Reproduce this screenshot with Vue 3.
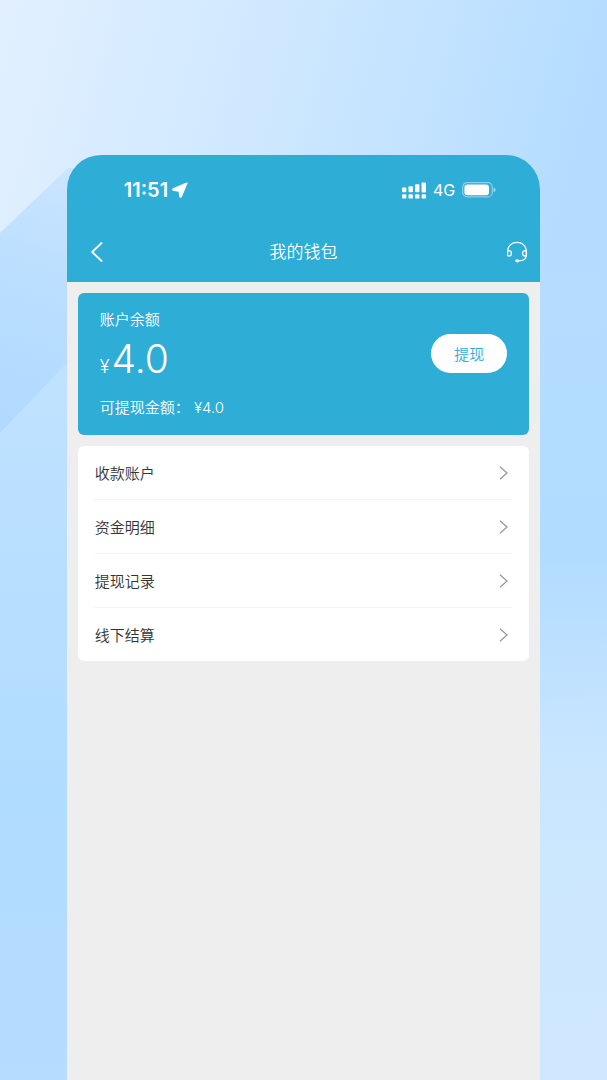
<template>
  <div class="wallet-page">
    <!-- 背景光影 -->
    <svg class="backdrop" viewBox="0 0 607 1080" preserveAspectRatio="none" aria-hidden="true">
      <defs>
        <linearGradient id="sky" x1="0" y1="0" x2="590" y2="160" gradientUnits="userSpaceOnUse">
          <stop offset="0" stop-color="#e2f0ff" />
          <stop offset="0.4" stop-color="#d1e9ff" />
          <stop offset="0.75" stop-color="#c1e2ff" />
          <stop offset="1" stop-color="#b3dcff" />
        </linearGradient>
        <linearGradient id="band" x1="0" y1="430" x2="90" y2="170" gradientUnits="userSpaceOnUse">
          <stop offset="0" stop-color="#b1d9ff" />
          <stop offset="0.5" stop-color="#b9deff" />
          <stop offset="0.8" stop-color="#c3e2ff" />
          <stop offset="1" stop-color="#cde6ff" />
        </linearGradient>
        <linearGradient id="left" x1="0" y1="380" x2="0" y2="1080" gradientUnits="userSpaceOnUse">
          <stop offset="0" stop-color="#bfe2ff" />
          <stop offset="0.25" stop-color="#b9dfff" />
          <stop offset="0.6" stop-color="#b0dcff" />
          <stop offset="1" stop-color="#b6dcff" />
        </linearGradient>
        <linearGradient id="right" x1="540" y1="160" x2="555" y2="1080" gradientUnits="userSpaceOnUse">
          <stop offset="0" stop-color="#b3dcff" stop-opacity="0" />
          <stop offset="0.15" stop-color="#b4ddff" />
          <stop offset="0.43" stop-color="#b2dcff" />
          <stop offset="0.66" stop-color="#cae6ff" />
          <stop offset="1" stop-color="#cfe8ff" />
        </linearGradient>
      </defs>
      <rect width="607" height="1080" fill="url(#sky)" />
      <path d="M0 233L68 168H100V460H0z" fill="url(#band)" />
      <path d="M0 433L68 362H100V1080H0z" fill="url(#left)" />
      <rect x="500" y="160" width="107" height="920" fill="url(#right)" />
    </svg>

    <div class="phone">
      <header class="header">
        <div class="status-bar">
          <div class="status-left">
            <span class="time">11:51</span>
            <svg width="16" height="16" viewBox="0 0 16 16" aria-hidden="true">
              <path d="M14.8 1.2L1.2 7Q.6 7.8 1.6 8.3L7.2 8.9L8 14.4Q8.4 15.4 9.1 14.6Z" fill="#fff" stroke="#fff" stroke-width="1.6" stroke-linejoin="round" />
            </svg>
          </div>
          <div class="status-right">
            <svg width="24" height="17" viewBox="0 0 24 17" fill="#fff" aria-hidden="true">
              <rect x="0" y="5.5" width="4.4" height="4.8" rx="1" />
              <rect x="6.5" y="4.3" width="4.4" height="6" rx="1" />
              <rect x="13" y="2.2" width="4.4" height="8.1" rx="1" />
              <rect x="19.6" y="0.6" width="4.4" height="9.8" rx="1" />
              <rect x="0" y="12.2" width="4.4" height="4.4" rx="1.2" />
              <rect x="6.5" y="12.2" width="4.4" height="4.4" rx="1.2" />
              <rect x="13" y="12.2" width="4.4" height="4.4" rx="1.2" />
              <rect x="19.6" y="12.2" width="4.4" height="4.4" rx="1.2" />
            </svg>
            <span class="network">4G</span>
            <svg width="34" height="16" viewBox="0 0 34 16" aria-hidden="true">
              <rect x="0.7" y="0.7" width="29.6" height="14.2" rx="4.5" fill="none" stroke="#fff" stroke-opacity="0.45" stroke-width="1.2" />
              <rect x="2.4" y="2.4" width="24.6" height="10.8" rx="3" fill="#fff" />
              <path d="M31.6 5.4Q33.6 6.2 33.6 7.8Q33.6 9.4 31.6 10.2z" fill="#fff" fill-opacity="0.55" />
            </svg>
          </div>
        </div>

        <nav class="nav-bar">
          <button class="icon-button" type="button" aria-label="返回">
            <svg width="12" height="20" viewBox="0 0 12 20" fill="none" stroke="#fff" stroke-width="1.8" stroke-linecap="round" stroke-linejoin="round">
              <path d="M10.6 1L1.2 10L10.6 19" />
            </svg>
          </button>
          <h1>我的钱包</h1>
          <button class="icon-button service" type="button" aria-label="客服">
            <svg width="22" height="22" viewBox="0 0 22 22" fill="none" stroke="#fff" stroke-width="1.3" stroke-linecap="round">
              <path d="M1.6 10.6V9.6C2 4.6 6 1.4 11 1.4S20 4.6 20.4 9.6V14.2Q20.2 18.2 16 19.4L12.6 19.9" />
              <path d="M1.6 10.8Q1.6 9.7 2.9 9.7Q5.4 9.8 5.4 12.4Q5.4 15 2.9 15.1Q1.6 15.1 1.6 14Z" />
              <path d="M20.4 10.8Q20.4 9.7 19.1 9.7Q16.6 9.8 16.6 12.4Q16.6 15 19.1 15.1Q20.4 15.1 20.4 14Z" />
              <ellipse cx="11.2" cy="19.8" rx="2" ry="1.6" fill="#fff" stroke="none" />
            </svg>
          </button>
        </nav>
      </header>

      <main class="content">
        <section class="balance-card">
          <div class="balance-info">
            <p class="label">账户余额</p>
            <p class="amount"><span class="symbol">¥</span><span>{{ balance }}</span></p>
            <p class="label">可提现金额： ¥{{ balance }}</p>
          </div>
          <button class="withdraw" type="button">提现</button>
        </section>

        <ul class="menu">
          <li v-for="item in menus" :key="item">
            <a href="#">
              <span>{{ item }}</span>
              <svg width="9" height="14" viewBox="0 0 9 14" fill="none" stroke="#999" stroke-width="1.3" aria-hidden="true">
                <path d="M1 0.8L8 7L1 13.2" />
              </svg>
            </a>
          </li>
        </ul>
      </main>
    </div>
  </div>
</template>

<script setup>
import { ref } from 'vue'

const balance = ref('4.0')
const menus = ['收款账户', '资金明细', '提现记录', '线下结算']
</script>

<style>
body {
  margin: 0;
}
</style>

<style scoped>
.wallet-page {
  position: relative;
  display: flex;
  box-sizing: border-box;
  min-height: 100vh;
  padding: 155px 11% 0;
  font-family: Inter, 'Noto Sans CJK SC', sans-serif;
}

.backdrop {
  position: absolute;
  top: 0;
  left: 0;
  width: 100%;
  height: 100%;
}

svg {
  display: block;
}

.phone {
  position: relative;
  flex: 1;
  overflow: hidden;
  border-radius: 34px 34px 0 0;
  background: #eee;
}

.header {
  padding-bottom: 3px;
  background: #2eadd7;
  color: #fff;
}

.status-bar {
  display: flex;
  align-items: center;
  justify-content: space-between;
  height: 70px;
  padding: 0 44px 0 57px;
}

.status-left {
  display: flex;
  align-items: center;
  gap: 4px;
}

.time {
  font-size: 20px;
  font-weight: 600;
}

.status-right {
  display: flex;
  align-items: center;
  gap: 7px;
}

.network {
  font-size: 16px;
}

.nav-bar {
  display: grid;
  grid-template-columns: 48px 1fr 48px;
  align-items: center;
  height: 54px;
  padding: 0 12px;
}

.nav-bar h1 {
  margin: 0;
  font-size: 17px;
  font-weight: 350;
  line-height: 24px;
  text-align: center;
}

.icon-button {
  display: flex;
  padding: 12px;
  border: 0;
  background: none;
  cursor: pointer;
}

.service {
  justify-content: flex-end;
  padding-right: 0;
}

.content {
  display: flex;
  flex-direction: column;
  gap: 11px;
  padding: 11px;
}

.balance-card {
  display: flex;
  align-items: flex-start;
  justify-content: space-between;
  padding: 16px 22px;
  border-radius: 6px;
  background: #2eadd7;
  color: #fff;
}

.balance-info p {
  margin: 0;
}

.label {
  font-size: 15px;
  font-weight: 350;
  line-height: 22px;
}

.amount {
  display: flex;
  align-items: baseline;
  gap: 2px;
  padding-bottom: 2px;
  font-size: 39px;
  font-weight: 350;
  line-height: 56px;
}

.symbol {
  font-size: 18px;
}

.withdraw {
  height: 39px;
  margin-top: 25px;
  padding: 0 23px;
  border: 0;
  border-radius: 20px;
  background: #fff;
  color: #2eadd7;
  font-family: inherit;
  font-size: 15px;
  font-weight: 350;
  cursor: pointer;
}

.menu {
  margin: 0;
  padding: 0 17px;
  border-radius: 6px;
  background: #fff;
  list-style: none;
}

.menu li + li {
  border-top: 1px solid #f3f3f3;
}

.menu a {
  display: flex;
  align-items: center;
  justify-content: space-between;
  height: 53px;
  padding-right: 4px;
  color: #333;
  font-size: 15px;
  font-weight: 350;
  text-decoration: none;
}
</style>
